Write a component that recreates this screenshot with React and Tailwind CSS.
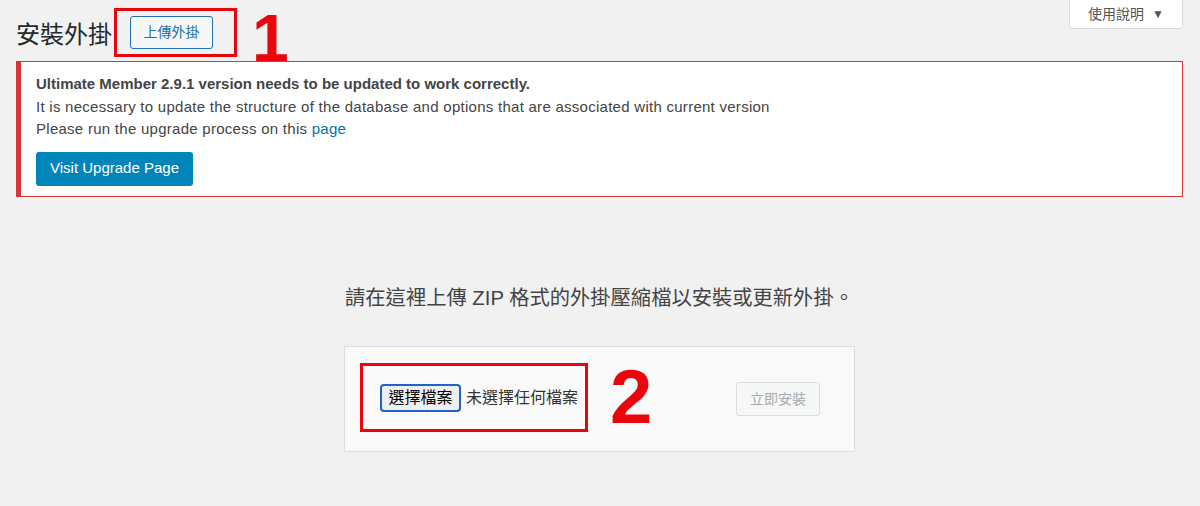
import React from "react";

const sans = { fontFamily: '"Liberation Sans", "Noto Sans CJK TC", sans-serif' };
const digit = { fontFamily: '"Liberation Sans", Arial, sans-serif' };

export default function App() {
  return (
    <div
      className="min-h-[506px] w-[1200px] bg-[#f1f1f1] pl-[16px] pr-[17px] text-[#444]"
      style={sans}
    >
      {/* header row */}
      <div className="flex h-[61px] items-start justify-between">
        <div className="mt-[8px] flex items-start">
          <h1 className="mt-[14px] text-[24px] leading-[26px] font-normal text-[#23282d]">安裝外掛</h1>
          <div className="ml-[2px] flex h-[49px] items-center border-[3px] border-[#e8060c] pl-[13px] pr-[21px]">
            <button className="flex h-[33px] w-[83px] items-center justify-center rounded-[3px] border border-[#2271b1] bg-[#f6f7f7] text-[14px] text-[#2271b1]">
              上傳外掛
            </button>
          </div>
          <span
            className="ml-[15px] -mt-[4px] text-[66px] leading-[68px] font-black text-[#e8060c]"
            style={digit}
          >
            1
          </span>
        </div>
        <button className="flex h-[29px] w-[114px] items-center justify-center gap-[8px] rounded-b-[4px] border border-t-0 border-[#dcdcde] bg-white text-[14px] text-[#555]">
          <span>使用說明</span>
          <span className="text-[12px]">▼</span>
        </button>
      </div>

      {/* notice */}
      <div className="h-[136px] border border-l-[5px] border-[#d63638] bg-white pl-[15px] pt-[11px]">
        <p className="text-[15px] leading-[22.5px] font-bold text-[#444]">
          Ultimate Member 2.9.1 version needs to be updated to work correctly.
        </p>
        <p className="text-[15px] leading-[22.5px] tracking-[0.27px] text-[#444]">
          It is necessary to update the structure of the database and options that are associated with current version
        </p>
        <p className="text-[15px] leading-[22.5px] tracking-[0.27px] text-[#444]">
          Please run the upgrade process on this <span className="text-[#0073aa]">page</span>
        </p>
        <button className="mt-[11px] flex h-[34px] w-[157px] items-center justify-center rounded-[3px] bg-[#0085ba] text-[15px] text-white">
          Visit Upgrade Page
        </button>
      </div>

      {/* upload description */}
      <p className="mt-[86px] text-center text-[20.3px] leading-[30px] text-[#444]">
        請在這裡上傳 ZIP 格式的外掛壓縮檔以安裝或更新外掛。
      </p>

      {/* upload form */}
      <div className="mx-auto mt-[33px] flex h-[106px] w-[511px] items-center border border-[#dcdcde] bg-[#f9f9f9] pl-[15px] pr-[34px]">
        <div className="-mt-[3px] flex h-[69px] w-[228px] items-center border-[3px] border-[#e8060c] pl-[17px]">
          <button className="flex h-[28px] w-[81px] items-center justify-center rounded-[4px] border-2 border-[#1a65c7] bg-[#efefef] text-[16px] text-black">
            選擇檔案
          </button>
          <span className="ml-[5px] text-[16px] text-[#333]">未選擇任何檔案</span>
        </div>
        <span
          className="ml-[22px] -mt-[4px] text-[76px] leading-[76px] font-black text-[#e8060c]"
          style={digit}
        >
          2
        </span>
        <button
          disabled
          className="ml-auto flex h-[34px] w-[84px] items-center justify-center rounded-[3px] border border-[#dcdcde] bg-[#f6f7f7] text-[14px] text-[#a7aaad]"
        >
          立即安裝
        </button>
      </div>
    </div>
  );
}
